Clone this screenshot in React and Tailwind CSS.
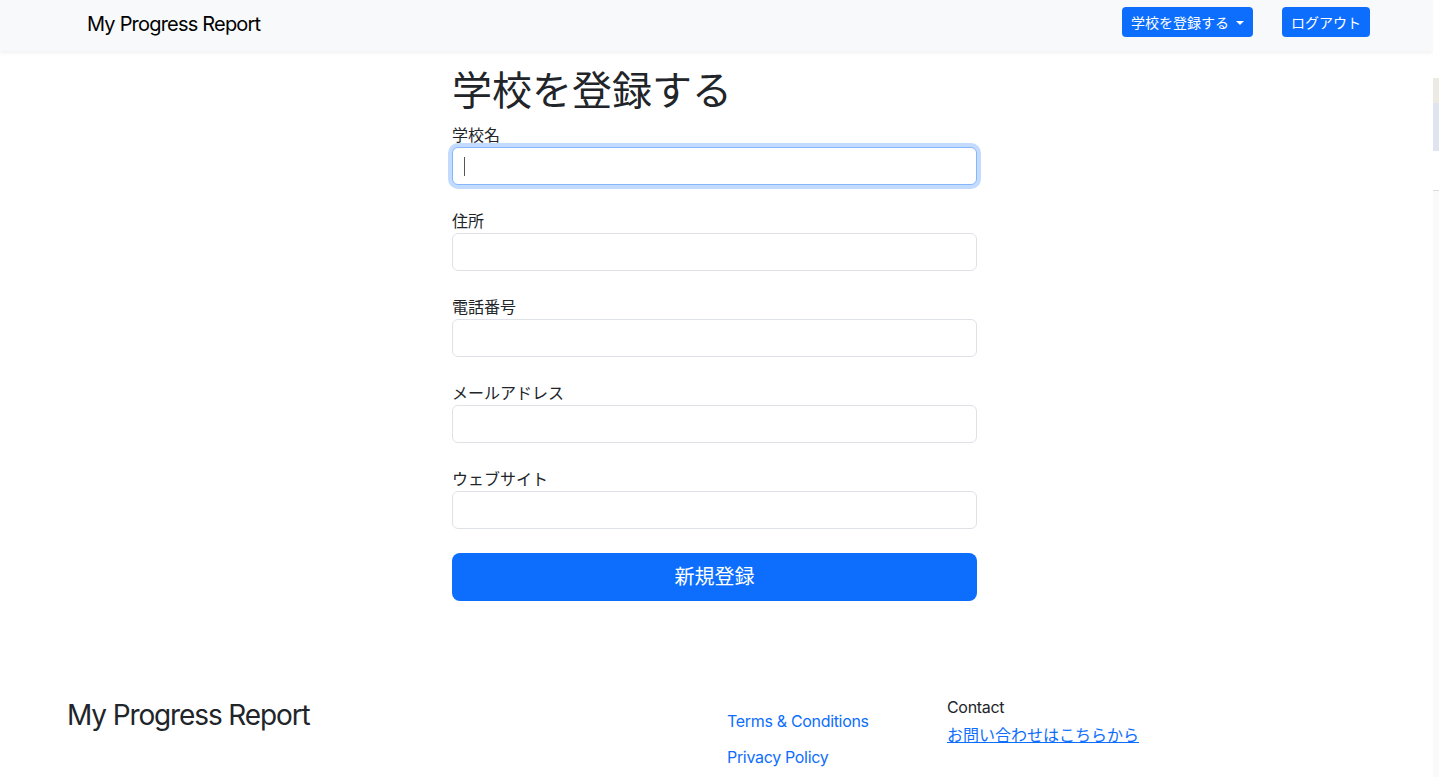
import React from "react";

const FIELDS = ["学校名", "住所", "電話番号", "メールアドレス", "ウェブサイト"];

const font = { fontFamily: 'Inter, "Noto Sans CJK JP", sans-serif' };

function Field({ label, focused }) {
  return (
    <div className="mb-6">
      <label className="block text-[16px] leading-6 text-[#212529]">{label}</label>
      <div className="relative">
        <input
          type="text"
          className={
            "block h-[38px] w-full rounded-[6px] border bg-white px-3 text-[16px] outline-none " +
            (focused
              ? "border-[#86b7fe] shadow-[0_0_0_4px_rgba(13,110,253,0.25)]"
              : "border-[#dee2e6]")
          }
        />
        {focused && <span className="absolute left-[12px] top-[10px] h-[19px] w-px bg-[#555]" />}
      </div>
    </div>
  );
}

export default function App() {
  return (
    <div className="flex min-h-[777px] w-[1439px] bg-white text-[#212529]" style={font}>
      <div className="w-[1433px] shrink-0">
        <header className="flex h-[51px] items-center justify-between bg-[#f8f9fa] pb-[7px] pl-[87px] pr-[63px] shadow-[0_2px_4px_rgba(0,0,0,0.06)]">
          <a className="mt-[3px] text-[20px] leading-none tracking-[-0.04em] text-black">My Progress Report</a>
          <div className="flex items-center gap-[29px]">
            <button className="flex h-[30px] items-center gap-[7px] rounded-[4px] bg-[#0d6efd] px-[9px] text-[14px] text-white">
              学校を登録する
              <span className="mt-[1px] h-0 w-0 border-x-[4px] border-t-[4px] border-x-transparent border-t-white" />
            </button>
            <button className="h-[30px] rounded-[4px] bg-[#0d6efd] px-[9px] text-[14px] text-white">ログアウト</button>
          </div>
        </header>

        <main className="ml-[452px] w-[525px] pt-[16px]">
          <h1 className="mb-2 text-[40px] leading-[48px] font-normal">学校を登録する</h1>
          {FIELDS.map((f, i) => (
            <Field key={f} label={f} focused={i === 0} />
          ))}
          <button className="h-[48px] w-full rounded-[8px] bg-[#0d6efd] text-[20px] text-white">新規登録</button>
        </main>

        <footer className="mt-[94px] flex pl-[67px]">
          <div className="w-[660px] pt-[3px]">
            <h3 className="text-[28px] leading-[34px] font-normal tracking-[-0.04em]">My Progress Report</h3>
          </div>
          <ul className="w-[220px] pt-[14px] text-[16px] leading-6 tracking-[-0.02em]">
            <li className="mb-3"><a className="text-[#0d6efd]">Terms &amp; Conditions</a></li>
            <li><a className="text-[#0d6efd]">Privacy Policy</a></li>
          </ul>
          <div className="text-[16px] leading-6">
            <p className="mb-1 tracking-[-0.02em]">Contact</p>
            <a className="text-[#0d6efd] underline">お問い合わせはこちらから</a>
          </div>
        </footer>
      </div>
      <div className="flex w-[6px] flex-col">
        <div className="h-[78px] bg-white" />
        <div className="h-[25px] bg-[#eceae2]" />
        <div className="h-[48px] bg-[#dfe4ee]" />
        <div className="h-[39px] bg-white" />
        <div className="h-px bg-[#dcdcdc]" />
        <div className="flex-1 bg-[#fafafa]" />
      </div>
    </div>
  );
}
